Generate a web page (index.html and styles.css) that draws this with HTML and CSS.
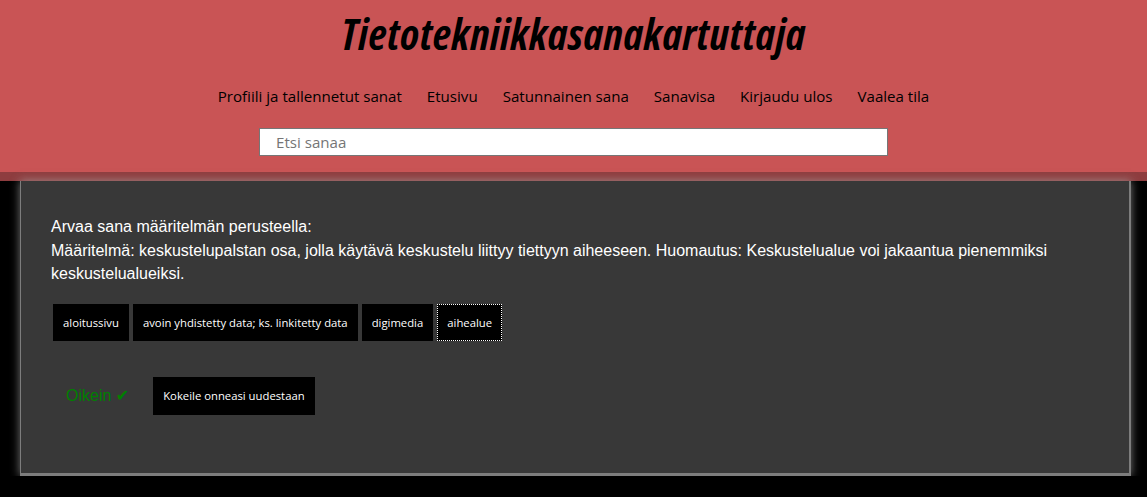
FILE: index.html
```html
<!DOCTYPE html>
<html lang="fi">
<head>
<meta charset="utf-8">
<title>Tietotekniikkasanakartuttaja</title>
<link rel="stylesheet" href="styles.css">
</head>
<body>
<header class="site-header">
  <h1 class="site-title">Tietotekniikkasanakartuttaja</h1>
  <nav class="main-nav">
    <a href="#">Profiili ja tallennetut sanat</a>
    <a href="#">Etusivu</a>
    <a href="#">Satunnainen sana</a>
    <a href="#">Sanavisa</a>
    <a href="#">Kirjaudu ulos</a>
    <a href="#">Vaalea tila</a>
  </nav>
  <div class="search-row">
    <input class="search-input" type="text" placeholder="Etsi sanaa">
  </div>
</header>
<main class="quiz-panel">
  <p class="quiz-question">Arvaa sana määritelmän perusteella:<br>Määritelmä: keskustelupalstan osa, jolla käytävä keskustelu liittyy tiettyyn aiheeseen. Huomautus: Keskustelualue voi jakaantua pienemmiksi keskustelualueiksi.</p>
  <div class="options">
    <button class="opt">aloitussivu</button>
    <button class="opt">avoin yhdistetty data; ks. linkitetty data</button>
    <button class="opt">digimedia</button>
    <button class="opt opt-focused">aihealue</button>
  </div>
  <div class="result-row">
    <span class="result">Oikein <span class="check">✔</span></span>
    <button class="opt">Kokeile onneasi uudestaan</button>
  </div>
</main>
</body>
</html>
```

FILE: styles.css
```css
html, body {
  margin: 0;
  padding: 0;
  background: #000;
}
body {
  font-family: "Liberation Sans", Arial, sans-serif;
}
.site-header {
  background: #c95455;
  border-bottom: 9px solid #8e3d3f;
  padding-top: 6px;
  height: 166px;
  box-sizing: content-box;
}
.site-title {
  margin: 0;
  text-align: center;
  font-family: "Open Sans", sans-serif;
  font-stretch: 75%;
  font-style: italic;
  font-weight: 700;
  font-size: 43px;
  line-height: 56px;
  color: #000;
  letter-spacing: 0.5px;
}
.main-nav {
  display: flex;
  justify-content: center;
  gap: 25px;
  margin-top: 23px;
  font-family: "Open Sans", sans-serif;
  font-size: 15.1px;
  line-height: 22px;
}
.main-nav a {
  color: #000;
  text-decoration: none;
}
.search-row {
  display: flex;
  justify-content: center;
  margin-top: 21px;
}
.search-input {
  width: 629px;
  height: 28px;
  box-sizing: border-box;
  border: 1px solid #767676;
  background: #fff;
  padding: 0 16px;
  font-family: "Open Sans", sans-serif;
  font-size: 15.1px;
  margin: 0;
}
.search-input::placeholder {
  color: #757575;
}
.quiz-panel {
  display: block;
  margin: 0 16px 0 20px;
  background: #383838;
  border-left: 1px solid #7d7d7d;
  border-right: 2px solid #7d7d7d;
  border-bottom: 3px solid #7d7d7d;
  box-shadow: 0 0 9px rgba(170, 170, 170, 0.7);
  padding: 33px 30px 58px 30px;
  color: #fff;
}
.quiz-question {
  margin: 0;
  font-size: 16px;
  line-height: 23.5px;
  padding-top: 1px;
}
.options {
  display: flex;
  flex-wrap: wrap;
  margin-top: 18px;
}
.opt {
  background: #000;
  color: #fff;
  border: 0;
  margin: 0 2px;
  padding: 10px 10px;
  font-family: "Open Sans", sans-serif;
  font-size: 11.3px;
  line-height: 17px;
  height: 37px;
  cursor: pointer;
}
.opt-focused {
  outline: 1px dotted #fff;
  outline-offset: -1px;
}
.result-row {
  display: flex;
  align-items: center;
  margin-top: 36px;
}
.result {
  color: #008000;
  font-size: 16px;
  padding: 0 22px 0 15px;
}
.check {
  font-family: "DejaVu Sans", sans-serif;
  font-size: 16px;
}
.result-row .opt {
  height: 38px;
}
```
